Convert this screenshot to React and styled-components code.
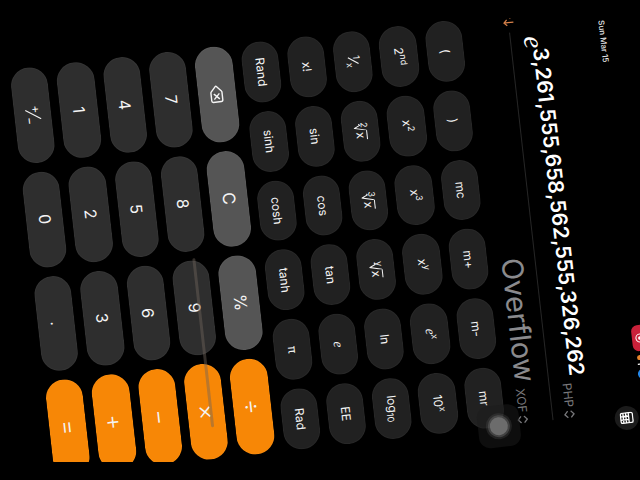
import React, { useState } from 'react';
import styled, { createGlobalStyle } from 'styled-components';
import { Delete } from 'lucide-react';

const GlobalStyle = createGlobalStyle`
  * {
    box-sizing: border-box;
  }

  body {
    margin: 0;
    background: #000;
    color: #fff;
    font-family: Inter, "Liberation Sans", sans-serif;
    overflow: hidden;
  }

  button {
    font-family: inherit;
    cursor: pointer;
  }
`;

const Stage = styled.main`
  display: flex;
  align-items: center;
  justify-content: center;
  height: calc(100vh - 36px);
  margin: 18px 0;
  overflow: hidden;
  background: #000;
`;

/* the phone lies on its side, so its width follows the window height */
const Phone = styled.div`
  position: relative;
  flex: none;
  display: flex;
  flex-direction: column;
  width: calc(100vh - 34px);
  height: calc(100vw - 8px);
  padding-bottom: 26px;
  transform: rotate(83.6deg);
`;

const TopBar = styled.header`
  display: flex;
  align-items: flex-start;
  height: 43px;
  padding-left: 36px;
`;

const DateLabel = styled.time`
  flex: 1;
  font-size: 8px;
  line-height: 24px;
  font-weight: 500;
  color: #e4e4e4;
`;

const StatusIcons = styled.div`
  display: flex;
  align-items: center;
  gap: 4px;
  height: 18px;
  margin-right: 23px;
`;

const RecordingPill = styled.span`
  display: flex;
  align-items: center;
  justify-content: center;
  width: 26px;
  height: 16px;
  border-radius: 6px;
  background: #c9213a;
`;

const ModeButton = styled.button`
  display: flex;
  align-items: center;
  justify-content: center;
  align-self: flex-end;
  width: 24px;
  height: 24px;
  padding: 0;
  border: none;
  border-radius: 50%;
  background: #1b1b1b;
  color: #fff;
`;

const Line = styled.div`
  display: flex;
  align-items: baseline;
  justify-content: flex-end;
  gap: 6px;
  padding: 0 18px 0 44px;
`;

const ExpressionLine = styled(Line)`
  height: 58px;
  padding-top: 24px;
  line-height: 40px;
`;

const ResultLine = styled(Line)`
  height: 45px;
  line-height: 42px;
`;

const Expression = styled.output`
  flex: 1;
  display: flex;
  align-items: baseline;
  white-space: nowrap;
`;

const Base = styled.i`
  font-family: "Liberation Serif", serif;
  font-size: 28px;
  line-height: 30px;
`;

const Exponent = styled.span`
  position: relative;
  top: -8px;
  font-size: 21px;
  line-height: 24px;
  font-weight: 600;
`;

const Result = styled.output`
  font-size: 29px;
  color: #8a8a8d;
`;

const Currency = styled.button`
  display: flex;
  align-items: center;
  gap: 3px;
  padding: 0;
  border: none;
  background: none;
  color: #77777a;
  font-size: 12px;
  line-height: 12px;
`;

const DividerRow = styled.div`
  display: flex;
  align-items: center;
  gap: 6px;
  height: 6px;
  padding: 0 18px 0 16px;
`;

const SwapButton = styled.button`
  display: flex;
  padding: 0;
  border: none;
  background: none;
  color: #d9824a;
`;

const Rule = styled.hr`
  flex: 1;
  height: 1px;
  margin: 0;
  border: none;
  background: #262626;
`;

const Keypad = styled.section`
  flex: 1;
  display: flex;
  flex-direction: column;
  gap: 9px;
  margin: 0 17px 0 19px;
`;

const KeyRow = styled.div`
  flex: 1;
  display: grid;
  grid-template-columns: repeat(${props => props.$columns}, 1fr);
  gap: 9px;
`;

const keyColors = {
  fn: '#212121',
  digit: '#2e2e2e',
  edit: '#555555',
  op: '#f78706',
};

const keySizes = {
  fn: '12px',
  digit: '16px',
  edit: '17px',
  op: '24px',
};

const Key = styled.button`
  display: flex;
  align-items: center;
  justify-content: center;
  padding: 0;
  border: 1px solid rgba(255, 255, 255, 0.03);
  border-radius: 20px;
  background: ${props => keyColors[props.$kind]};
  background-clip: border-box;
  color: #f4f4f4;
  font-size: ${props => keySizes[props.$kind]};
  font-weight: ${props => (props.$kind === 'op' ? 300 : 400)};
  line-height: 18px;
  white-space: nowrap;
`;

const Small = styled.span`
  align-self: ${props => (props.$low ? 'flex-end' : 'flex-start')};
  font-size: 9px;
  line-height: ${props => (props.$low ? '12px' : '10px')};
`;

const Label = styled.span`
  display: flex;
  align-items: center;
`;

const FractionLabel = styled(Label)`
  height: 16px;

  svg {
    margin: 0 -4px;
  }

  span {
    font-size: ${props => (props.$large ? '12px' : '9px')};
    line-height: 9px;
  }
`;

const Italic = styled.i`
  font-family: "Liberation Serif", serif;
  font-size: 14px;
`;

const RootIndex = styled.span`
  align-self: flex-start;
  margin-right: -4px;
  font-size: 9px;
  line-height: 6px;
`;

const Radicand = styled.span`
  padding: 0 1px;
  border-top: 1px solid #f4f4f4;
  font-size: 12px;
  line-height: 12px;
`;

const HomeIndicator = styled.div`
  position: absolute;
  left: 51%;
  top: 70%;
  width: 38%;
  height: 3px;
  border-radius: 2px;
  background: rgba(110, 100, 90, 0.45);
`;

const AssistiveTouch = styled.button`
  position: absolute;
  right: -3px;
  top: 138px;
  display: flex;
  align-items: center;
  justify-content: center;
  width: 42px;
  height: 42px;
  padding: 0;
  border: none;
  border-radius: 11px;
  background: rgba(28, 28, 28, 0.5);
`;

const TouchDot = styled.span`
  width: 18px;
  height: 18px;
  border-radius: 50%;
  background: #6c6c6c;
  box-shadow: 0 0 0 2px rgba(100, 100, 100, 0.5), 0 0 0 4px rgba(90, 90, 90, 0.25);
`;

function Power({ base, exponent }) {
  return (
    <Label>
      {base}
      <Small>{exponent}</Small>
    </Label>
  );
}

function Root({ index }) {
  return (
    <Label>
      <RootIndex>{index}</RootIndex>
      <svg width="7" height="13" viewBox="0 0 7 13" fill="none" stroke="#f4f4f4">
        <path d="M0 8L1.5 7L4 12.5L7 0.5" />
      </svg>
      <Radicand>x</Radicand>
    </Label>
  );
}

function Fraction({ top, bottom, large }) {
  return (
    <FractionLabel $large={large}>
      <Small>{top}</Small>
      <svg width="11" height="16" viewBox="0 0 11 16" fill="none" stroke="#f4f4f4" strokeWidth="1.1">
        <path d={large ? 'M0.5 15.5L10.5 0.5' : 'M2 13L9 3'} />
      </svg>
      <Small $low>{bottom}</Small>
    </FractionLabel>
  );
}

function UpDown() {
  return (
    <svg width="8" height="11" viewBox="0 0 8 11" fill="none" stroke="currentColor" strokeWidth="1.3">
      <path d="M0.7 4L4 0.9L7.3 4M0.7 7L4 10.1L7.3 7" />
    </svg>
  );
}

const functionRows = [
  [['('], [')'], ['mc'], ['m+'], ['m-'], ['mr']],
  [
    ['2nd', <Power base="2" exponent="nd" />],
    ['x squared', <Power base="x" exponent="2" />],
    ['x cubed', <Power base="x" exponent="3" />],
    ['x to the y', <Power base="x" exponent="y" />],
    ['e to the x', <Power base={<Italic>e</Italic>} exponent="x" />],
    ['10 to the x', <Power base="10" exponent="x" />],
  ],
  [
    ['reciprocal', <Fraction top="1" bottom="x" />],
    ['square root', <Root index="2" />],
    ['cube root', <Root index="3" />],
    ['y root', <Root index="y" />],
    ['ln'],
    ['log10', <Label>log<Small $low>10</Small></Label>],
  ],
  [['x!'], ['sin'], ['cos'], ['tan'], ['e', <Italic>e</Italic>], ['EE']],
  [['Rand'], ['sinh'], ['cosh'], ['tanh'], ['π'], ['Rad']],
];

const mainRows = [
  [['delete', <Delete size={19} strokeWidth={1.8} />, 'edit'], ['C', null, 'edit'], ['%', null, 'edit'], ['÷', null, 'op']],
  [['7'], ['8'], ['9'], ['×', null, 'op']],
  [['4'], ['5'], ['6'], ['−', null, 'op']],
  [['1'], ['2'], ['3'], ['+', null, 'op']],
  [['plus minus', <Fraction top="+" bottom="−" large />], ['0'], ['.'], ['=', null, 'op']],
];

function App() {
  const [exponent, setExponent] = useState('3,261,555,658,562,555,326,262');

  const handleKey = (name) => {
    if (name === 'delete') {
      setExponent(exponent.slice(0, -1));
    } else if (/^[0-9]$/.test(name)) {
      setExponent(exponent + name);
    }
  };

  const renderKey = (kind) => ([name, label, special]) => (
    <Key key={name} $kind={special || kind} aria-label={name} onClick={() => handleKey(name)}>
      {label || name}
    </Key>
  );

  return (
    <>
      <GlobalStyle />
      <Stage>
        <Phone>
          <TopBar>
            <DateLabel>Sun Mar 15</DateLabel>
            <StatusIcons>
              <RecordingPill>
                <svg width="10" height="10" viewBox="0 0 10 10">
                  <circle cx="5" cy="5" r="4" fill="none" stroke="#fff" />
                  <circle cx="5" cy="5" r="1.8" fill="#fff" />
                </svg>
              </RecordingPill>
              <svg width="26" height="12" viewBox="0 0 26 12">
                <circle cx="2.5" cy="8.5" r="2.5" fill="#e8862c" />
                <path d="M9 3V11" stroke="#fff" strokeWidth="1.4" />
                <circle cx="19" cy="7" r="5" fill="#2487e8" />
                <path d="M16.5 7H21.5M19 4.5V9.5" stroke="#bfe0ff" />
              </svg>
            </StatusIcons>
            <ModeButton aria-label="Calculator mode">
              <svg width="12" height="14" viewBox="0 0 12 14" fill="none" stroke="currentColor" strokeWidth="1.3">
                <rect x="1" y="1" width="10" height="12" rx="1.5" />
                <path d="M1 5H11M1 7.7H11M1 10.4H11M4.3 5V13M7.7 5V13" />
              </svg>
            </ModeButton>
          </TopBar>

          <ExpressionLine>
            <Expression>
              <Base>e</Base>
              <Exponent>{exponent}</Exponent>
            </Expression>
            <Currency>
              PHP
              <UpDown />
            </Currency>
          </ExpressionLine>

          <DividerRow>
            <SwapButton aria-label="Swap currencies">
              <svg width="16" height="11" viewBox="0 0 16 11" fill="none" stroke="currentColor" strokeWidth="1.2">
                <path d="M5 10.5V1M2 4L5 1L8 4M12 0.5V10M9 7L12 10L15 7" />
              </svg>
            </SwapButton>
            <Rule />
          </DividerRow>

          <ResultLine>
            <Result>Overflow</Result>
            <Currency>
              XOF
              <UpDown />
            </Currency>
          </ResultLine>

          <Keypad>
            {functionRows.map((row, i) => (
              <KeyRow key={i} $columns={6}>{row.map(renderKey('fn'))}</KeyRow>
            ))}
            {mainRows.map((row, i) => (
              <KeyRow key={i} $columns={4}>{row.map(renderKey('digit'))}</KeyRow>
            ))}
          </Keypad>

          <HomeIndicator />
          <AssistiveTouch aria-label="Assistive touch">
            <TouchDot />
          </AssistiveTouch>
        </Phone>
      </Stage>
    </>
  );
}

export default App;
